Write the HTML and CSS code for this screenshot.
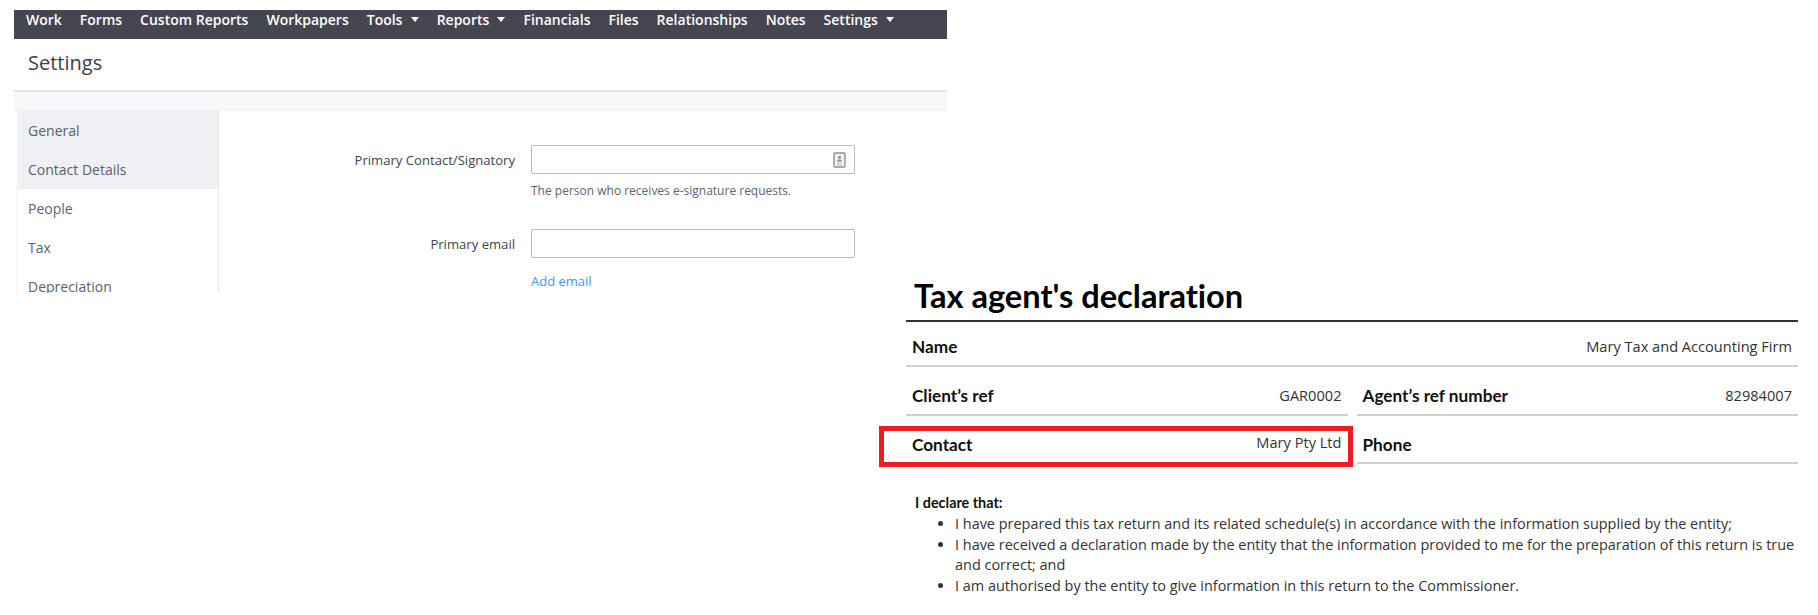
FILE: index.html
```html
<!DOCTYPE html>
<html lang="en">
<head>
    <meta charset="UTF-8">
    <title>Settings</title>
    <link rel="stylesheet" href="styles.css">
</head>
<body>

    <div class="clip clip-settings">
        <nav class="topnav">
            <a>Work</a>
            <a>Forms</a>
            <a>Custom Reports</a>
            <a>Workpapers</a>
            <a class="has-menu">Tools</a>
            <a class="has-menu">Reports</a>
            <a>Financials</a>
            <a>Files</a>
            <a>Relationships</a>
            <a>Notes</a>
            <a class="has-menu">Settings</a>
        </nav>
        <h1 class="page-title">Settings</h1>
        <div class="band"></div>
        <div class="settings-body">
            <ul class="sidenav">
                <li class="shaded">General</li>
                <li class="shaded">Contact Details</li>
                <li>People</li>
                <li>Tax</li>
                <li>Depreciation</li>
            </ul>
            <div class="form">
                <div class="form-row">
                    <label class="form-label">Primary Contact/Signatory</label>
                    <div class="form-field">
                        <div class="input">
                            <svg class="contact-icon" width="13" height="16" viewBox="0 0 13 16">
                                <rect x="1" y="1" width="11" height="14" rx="1" fill="#f4f4f4" stroke="#8f8f8f" stroke-width="1.4"/>
                                <circle cx="6.5" cy="5.4" r="1.4" fill="#8a8a8a"/>
                                <path d="M4 9.4h5v-.6l-1.4-1.4h-2.2l-1.4 1.4z" fill="#8a8a8a"/>
                                <path d="M4 11.2h5M4 12.8h5" stroke="#c4c4c4"/>
                            </svg>
                        </div>
                        <p class="help">The person who receives e-signature requests.</p>
                    </div>
                </div>
                <div class="form-row">
                    <label class="form-label">Primary email</label>
                    <div class="form-field">
                        <div class="input"></div>
                        <a class="add-link">Add email</a>
                    </div>
                </div>
            </div>
        </div>
    </div>

    <div class="clip clip-declaration">
        <h2 class="decl-title">Tax agent's declaration</h2>
        <div class="decl-row first">
            <div class="decl-cell">
                <span class="decl-label">Name</span>
                <span class="decl-value">Mary Tax and Accounting Firm</span>
            </div>
        </div>
        <div class="decl-row second">
            <div class="decl-cell">
                <span class="decl-label">Client’s ref</span>
                <span class="decl-value">GAR0002</span>
            </div>
            <div class="decl-cell">
                <span class="decl-label">Agent’s ref number</span>
                <span class="decl-value">82984007</span>
            </div>
        </div>
        <div class="decl-row third">
            <div class="decl-cell">
                <span class="decl-label">Contact</span>
                <span class="decl-value raised">Mary Pty Ltd</span>
                <div class="red-box"></div>
            </div>
            <div class="decl-cell">
                <span class="decl-label">Phone</span>
            </div>
        </div>
        <p class="declare">I declare that:</p>
        <ul class="declare-list">
            <li>I have prepared this tax return and its related schedule(s) in accordance with the information supplied by the entity;</li>
            <li>I have received a declaration made by the entity that the information provided to me for the preparation of this return is true and correct; and</li>
            <li>I am authorised by the entity to give information in this return to the Commissioner.</li>
        </ul>
    </div>

</body>
</html>
```

FILE: styles.css
```css
html, body {
    margin: 0;
    height: 615px;
    overflow: hidden;
    background: #fff;
}

/* the picture is two pasted screenshots on a white canvas */
.clip {
    position: absolute;
    box-sizing: border-box;
    overflow: hidden;
    font-family: "Open Sans", sans-serif;
}
.clip-settings {
    left: 14px;
    top: 10px;
    width: 933px;
    height: 283px;
}
.clip-declaration {
    left: 906px;
    top: 278px;
    width: 892px;
    height: 337px;
    overflow: visible;
}

/* top nav */
.topnav {
    display: flex;
    height: 29px;
    padding-left: 3px;
    background: #464650;
}
.topnav a {
    padding: 2px 9px 0;
    font-size: 14px;
    line-height: 16px;
    font-weight: 600;
    color: #fff;
}
.has-menu::after {
    content: "";
    display: inline-block;
    margin-left: 8.2px;
    vertical-align: 3px;
    border-left: 4px solid transparent;
    border-right: 4px solid transparent;
    border-top: 5px solid #fff;
}

.page-title {
    margin: 0;
    height: 51px;
    padding-left: 14px;
    border-bottom: 2px solid #e4e5e8;
    font-size: 20px;
    font-weight: 400;
    line-height: 47px;
    color: #3c404c;
}
.band {
    height: 18px;
    background: #f7f8fa;
    border-bottom: 1px solid #f0f1f3;
}
.settings-body {
    display: flex;
    padding-left: 4px;
}

/* side menu */
.sidenav {
    width: 200px;
    margin: 0;
    padding: 0;
    list-style: none;
    border-right: 1px solid #e8e9ec;
    box-shadow: -1px 0 2px #eeeff1;
}
.sidenav li {
    height: 39px;
    padding-left: 10px;
    font-size: 14px;
    line-height: 40px;
    color: #5b5f6b;
}
.sidenav .shaded {
    background: #eff0f3;
}

/* form */
.form {
    padding-top: 34px;
}
.form-row {
    display: flex;
    margin-bottom: 31px;
}
.form-label {
    width: 296px;
    padding-right: 16px;
    text-align: right;
    font-size: 13.1px;
    line-height: 30px;
    color: #3f4350;
}
.form-field {
    width: 324px;
}
.input {
    display: flex;
    align-items: center;
    justify-content: flex-end;
    box-sizing: border-box;
    height: 29px;
    padding-right: 8px;
    border: 1px solid #b9b9b9;
    border-radius: 2px;
}
.help {
    margin: 9px 0 0;
    font-size: 12px;
    line-height: 15px;
    color: #5f6370;
}
.add-link {
    display: block;
    margin-top: 15px;
    font-size: 13px;
    line-height: 16px;
    color: #3d9be9;
}

/* declaration */
.decl-title {
    margin: 0;
    height: 42px;
    padding-left: 8px;
    border-bottom: 2px solid #333;
    font-family: Lato, sans-serif;
    font-size: 32.6px;
    font-weight: 700;
    line-height: 36px;
    font-variant-ligatures: none;
    color: #000;
}
.decl-row {
    display: flex;
    gap: 9px;
}
.decl-row.first {
    margin-top: 5px;
}
.decl-row.second {
    margin-top: 9px;
}
.decl-row.third {
    margin-top: 8px;
}
.decl-cell {
    position: relative;
    display: flex;
    flex: 1;
    align-items: center;
    justify-content: space-between;
    height: 38px;
    padding: 0 6px 0 6px;
    border-bottom: 2px solid #d0d0d0;
}
.third .decl-cell {
    height: 36px;
    padding-top: 2px;
}
.decl-label {
    font-family: Lato, sans-serif;
    font-size: 17.2px;
    font-weight: 700;
    font-variant-ligatures: none;
    color: #111;
}
.decl-value {
    font-size: 14.6px;
    color: #333;
}
.decl-value.raised {
    position: relative;
    top: -2px;
}
.red-box {
    position: absolute;
    left: -27px;
    right: -5px;
    top: 2px;
    bottom: -5px;
    border: 5px solid #ed1c24;
}
.declare {
    margin: 29px 0 0 9px;
    font-family: Lato, sans-serif;
    font-size: 14.4px;
    font-weight: 700;
    line-height: 20px;
    font-variant-ligatures: none;
    color: #111;
}
.declare-list {
    margin: 1px 0 0;
    padding-left: 49px;
    font-size: 14.45px;
    line-height: 20.7px;
    color: #333;
}
```
